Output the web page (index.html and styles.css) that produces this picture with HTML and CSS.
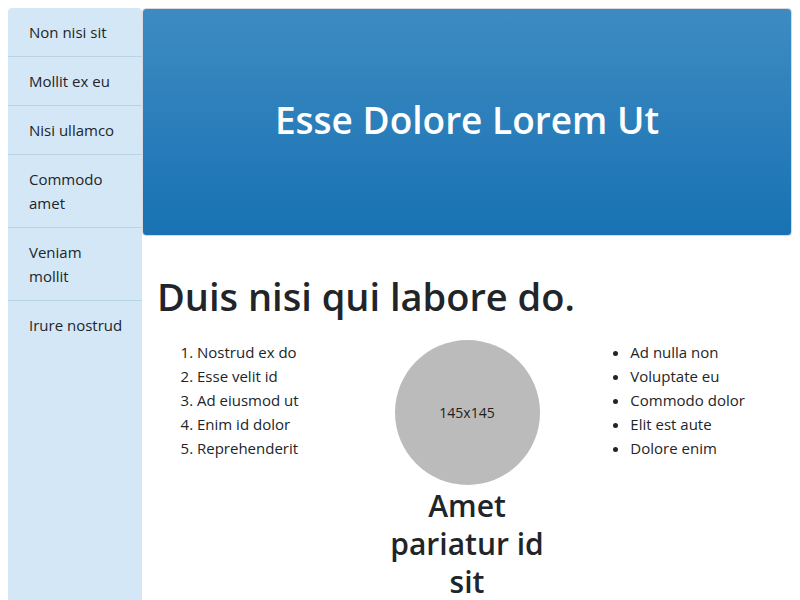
FILE: index.html
```html
<!DOCTYPE html>
<html>
<head>
<meta charset="utf-8">
<link rel="stylesheet" href="styles.css">
</head>
<body>
<div class="layout">
  <nav class="sidebar">
    <ul class="nav-list">
      <li class="nav-item">Non nisi sit</li>
      <li class="nav-item">Mollit ex eu</li>
      <li class="nav-item">Nisi ullamco</li>
      <li class="nav-item">Commodo amet</li>
      <li class="nav-item">Veniam mollit</li>
      <li class="nav-item">Irure nostrud</li>
    </ul>
  </nav>
  <main class="main">
    <header class="hero">
      <h1 class="hero-title">Esse Dolore Lorem Ut</h1>
    </header>
    <section class="content">
      <h1 class="page-title">Duis nisi qui labore do.</h1>
      <div class="row">
        <div class="col">
          <ol class="list">
            <li>Nostrud ex do</li>
            <li>Esse velit id</li>
            <li>Ad eiusmod ut</li>
            <li>Enim id dolor</li>
            <li>Reprehenderit</li>
          </ol>
        </div>
        <div class="col col-center">
          <div class="avatar">145x145</div>
          <h2 class="sub-title">Amet pariatur id sit</h2>
        </div>
        <div class="col">
          <ul class="list">
            <li>Ad nulla non</li>
            <li>Voluptate eu</li>
            <li>Commodo dolor</li>
            <li>Elit est aute</li>
            <li>Dolore enim</li>
          </ul>
        </div>
      </div>
    </section>
  </main>
</div>
</body>
</html>
```
FILE: styles.css
```css
html, body {
  margin: 0;
  padding: 0;
}
body {
  margin: 8px;
  font-family: "Open Sans", "Noto Sans", sans-serif;
  font-size: 15px;
  line-height: 24px;
  color: #212529;
  background: #fff;
}
.layout {
  display: flex;
  align-items: stretch;
  min-height: 620px;
}
.sidebar {
  width: 134px;
  flex: 0 0 134px;
  background: #d4e7f6;
  border-radius: 4px 4px 0 0;
}
.nav-list {
  list-style: none;
  margin: 0;
  padding: 0;
}
.nav-item {
  padding: 12px 19px 12px 21px;
  border-bottom: 1px solid #b9d3e7;
}
.nav-item:last-child {
  border-bottom: none;
}
.main {
  flex: 1;
  min-width: 0;
}
.hero {
  height: 226px;
  box-sizing: content-box;
  border: 1px solid #d6dadf;
  border-radius: 4px;
  background: linear-gradient(#3e8bc2, #1872b3);
  display: flex;
  align-items: center;
  justify-content: center;
}
.hero-title {
  margin: 0 0 5px;
  color: #fff;
  font-size: 37px;
  font-weight: 600;
  line-height: 44px;
}
.content {
  padding: 0 15px;
}
.page-title {
  margin: 36px 0 20px;
  font-size: 38px;
  font-weight: 600;
  line-height: 48px;
}
.row {
  display: flex;
  margin: 0 -15px;
}
.col {
  flex: 1 1 0;
  padding: 0 15px;
  min-width: 0;
}
.col-center {
  display: flex;
  flex-direction: column;
  align-items: center;
  text-align: center;
}
.list {
  margin: 0;
  padding-left: 40px;
}
.avatar {
  width: 145px;
  height: 145px;
  border-radius: 50%;
  background: #bbbbbb;
  display: flex;
  align-items: center;
  justify-content: center;
  font-size: 14px;
  color: #222;
}
.sub-title {
  margin: 2px 0 0;
  font-size: 30px;
  font-weight: 600;
  line-height: 38px;
}
```
